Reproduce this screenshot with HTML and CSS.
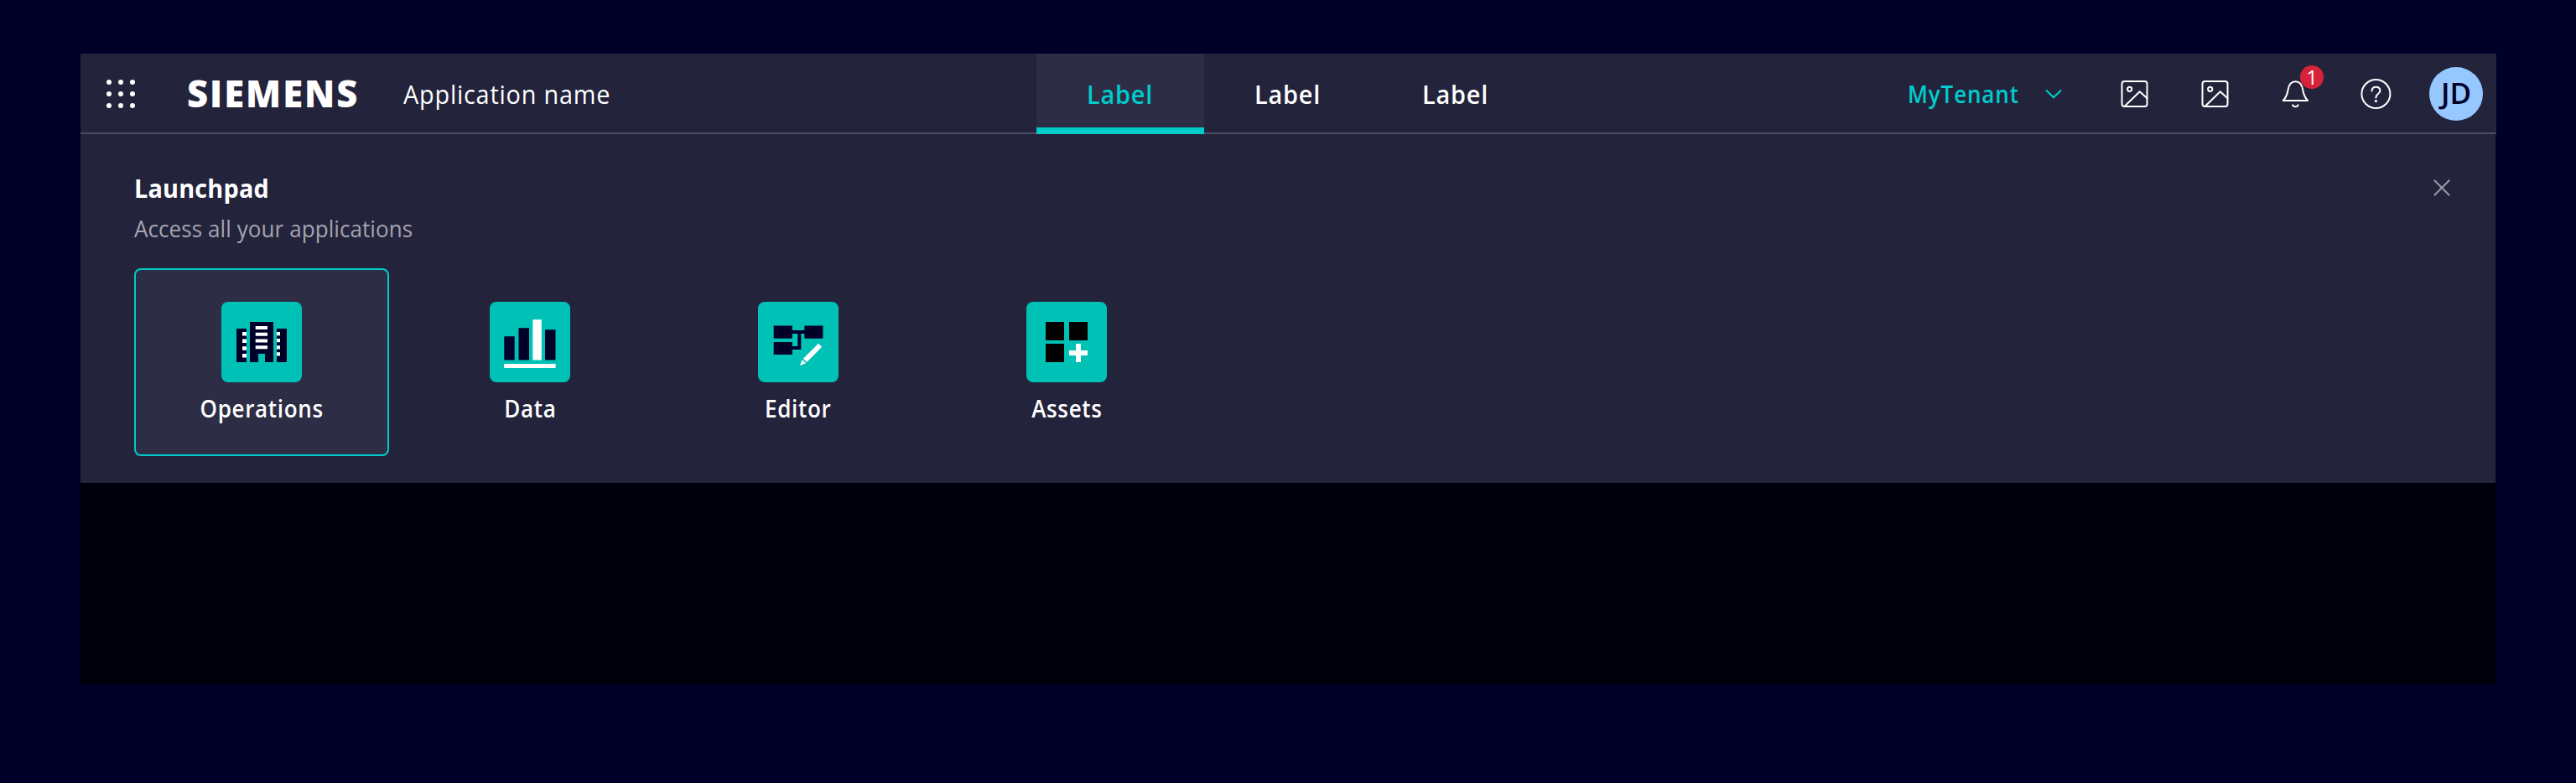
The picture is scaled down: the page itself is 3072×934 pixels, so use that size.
FILE: index.html
```html
<!DOCTYPE html>
<html lang="en">
<head>
<meta charset="utf-8">
<title>Launchpad</title>
<link rel="stylesheet" href="styles.css">
</head>
<body>
<div class="app">
  <header class="header">
    <div class="header-start">
      <svg class="cell" viewBox="0 0 96 96" fill="#fff">
        <circle cx="34" cy="34" r="3"/><circle cx="48" cy="34" r="3"/><circle cx="62" cy="34" r="3"/>
        <circle cx="34" cy="48" r="3"/><circle cx="48" cy="48" r="3"/><circle cx="62" cy="48" r="3"/>
        <circle cx="34" cy="62" r="3"/><circle cx="48" cy="62" r="3"/><circle cx="62" cy="62" r="3"/>
      </svg>
      <span class="logo">SIEMENS</span>
      <span class="app-name narrow">Application name</span>
    </div>
    <nav class="tabs">
      <a class="tab tab-active"><span class="tab-label">Label</span></a>
      <a class="tab"><span class="tab-label">Label</span></a>
      <a class="tab"><span class="tab-label">Label</span></a>
    </nav>
    <div class="header-end">
      <div class="tenant">
        <span class="tenant-name narrow">MyTenant</span>
        <svg class="chevron" viewBox="0 0 20 12"><path d="M1 1.5 10 10.3 19 1.5"/></svg>
      </div>
      <svg class="cell line" viewBox="0 0 96 96">
        <rect x="33.5" y="33" width="30" height="30" rx="3"/>
        <circle cx="42.7" cy="42.3" r="2.6"/>
        <path d="M37 62.5 54.7 45.2l8.8 8"/>
      </svg>
      <svg class="cell line" viewBox="0 0 96 96">
        <rect x="33.5" y="33" width="30" height="30" rx="3"/>
        <circle cx="42.7" cy="42.3" r="2.6"/>
        <path d="M37 62.5 54.7 45.2l8.8 8"/>
      </svg>
      <div class="bell">
        <svg class="cell line" viewBox="0 0 96 96">
          <path d="M33.8 56C37.6 52 38.6 48.500 39.500 43.500C40.500 37 43.500 33.300 48.400 33.300C53.300 33.300 56.300 37 57.300 43.500C58.200 48.500 59.200 52 63 56Z"/>
          <path d="M45.200 61.300C45.900 64 50.900 64 51.600 61.300"/>
        </svg>
        <span class="badge">1</span>
      </div>
      <svg class="cell line" viewBox="0 0 96 96">
        <circle cx="48.400" cy="48" r="17"/>
        <path d="M43.600 44.600C43.600 41.400 45.600 39.700 48.400 39.700C51.300 39.700 53.400 41.400 53.400 44.200C53.400 48 48.400 47.600 48.400 52.600"/>
        <circle class="dot" cx="48.400" cy="56.600" r="1.600"/>
      </svg>
      <div class="avatar-cell"><span class="avatar">JD</span></div>
    </div>
  </header>
  <main class="content">
    <section class="launchpad">
      <div class="launchpad-head">
        <div>
          <h2 class="title narrow">Launchpad</h2>
          <p class="subtitle narrow">Access all your applications</p>
        </div>
        <svg class="close" viewBox="0 0 20 20"><path d="M.8.8 19.200 19.200M19.200.8.8 19.200"/></svg>
      </div>
      <div class="apps">
        <a class="card card-active">
          <svg class="tile" viewBox="0 0 96 96">
            <path class="ink" d="M18 32h12v40H18zM34 24h28v48H52V62h-8v10H34zM66 32h12v40H66z"/>
            <path class="paper" d="M25 36h5v4.500h-5zM25 44.600h5v4.500h-5zM25 53.300h5v4.500h-5zM25 62h5v4.600h-5zM40.700 29H55v4H40.700zM40.700 36.800H55v4H40.700zM40.700 44.500H55v4H40.700zM40.700 52.300H55v4H40.700zM66 36h4v4.200h-4zM66 44h4v4.200h-4zM66 52.200h4v4.200h-4zM66 60.300h4v4.200h-4z"/>
          </svg>
          <span class="card-label">Operations</span>
        </a>
        <a class="card">
          <svg class="tile" viewBox="0 0 96 96">
            <path class="ink" d="M17.300 41.300h12.400v28.200H17.300zM34.500 31.200H47v38.300H34.500zM66 33.200h12.500v36.300H66z"/>
            <path class="paper" d="M51.300 21.200h10.500v48.300H51.300zM17.100 74h61.500v5H17.100z"/>
          </svg>
          <span class="card-label">Data</span>
        </a>
        <a class="card">
          <svg class="tile" viewBox="0 0 96 96">
            <path class="ink" d="M18.700 28.500h22.100V34h14.500v-5.500h22.100v15.200H55.300V38h-4v19H40.800v6H18.700V48h22.100v5h6.500V38h-6.500v5.700H18.700z"/>
            <path class="paper" d="M72 49.700l4.200 4.100L58.200 72l-4.300-4.200zM52.800 69l4.300 4.200L49.900 75.900z"/>
          </svg>
          <span class="card-label">Editor</span>
        </a>
        <a class="card">
          <svg class="tile" viewBox="0 0 96 96">
            <path fill="#000" d="M23 24h22v22H23zM51 24h22v22H51zM23 50h22v22H23z"/>
            <path class="paper" d="M59 50h6v8h8v6h-8v8h-6v-8h-8v-6h8z"/>
          </svg>
          <span class="card-label">Assets</span>
        </a>
      </div>
    </section>
  </main>
</div>
</body>
</html>
```
FILE: styles.css
```css
* { box-sizing: border-box; }
body {
  margin: 0;
  height: 934px;
  padding: 64px 96px;
  overflow: hidden;
  background: #000028;
  color: #fff;
  font-family: "Open Sans", "Noto Sans", sans-serif;
  font-size: 28px;
}
.narrow { transform: scaleX(.93); transform-origin: left center; }
.header {
  display: grid;
  grid-template-columns: 1140px 600px 1fr;
  height: 96px;
  margin-right: -1px;
  background: #23233c;
  box-shadow: inset 0 -2px #4c4c68;
}
.header-start, .header-end { display: flex; align-items: center; }
.header-end { justify-content: flex-end; }
.cell { display: block; flex: none; width: 96px; height: 96px; }
.line {
  fill: none;
  stroke: #fff;
  stroke-width: 2;
  stroke-linejoin: round;
  stroke-linecap: round;
}
.dot { fill: #fff; stroke: none; }
.logo {
  width: 258px;
  margin-left: 31px;
  padding-bottom: 1px;
  font-size: 43.5px;
  font-weight: 800;
  letter-spacing: 2px;
}
.app-name { font-size: 31px; letter-spacing: .85px; }
.tabs { display: grid; grid-template-columns: repeat(3, 200px); }
.tab {
  display: flex;
  align-items: center;
  justify-content: center;
  font-size: 31px;
  font-weight: 600;
}
.tab-label { transform: scaleX(.93); letter-spacing: .9px; }
.tab-active {
  background: #2d2d45;
  color: #00cccc;
  box-shadow: inset 0 -8px #00cccc;
}
.tenant {
  display: flex;
  align-items: center;
  width: 222px;
  color: #00cccc;
}
.tenant-name {
  width: 165px;
  padding-bottom: 1px;
  font-weight: 600;
  letter-spacing: .9px;
}
.chevron {
  width: 20px;
  height: 12px;
  margin-left: -1px;
  fill: none;
  stroke: #00cccc;
  stroke-width: 2;
}
.bell { position: relative; }
.badge {
  position: absolute;
  left: 54px;
  top: 14px;
  width: 28px;
  height: 28px;
  border-radius: 50%;
  background: #d72339;
  font-size: 24px;
  line-height: 27px;
  text-align: center;
}
.avatar-cell { display: flex; justify-content: center; width: 96px; }
.avatar {
  width: 64px;
  height: 64px;
  border-radius: 50%;
  background: #97c7ff;
  color: #000028;
  font-size: 35px;
  font-weight: 600;
  line-height: 62px;
  text-align: center;
}
.content { height: 656px; background: #00000a; }
.launchpad {
  height: 416px;
  padding: 40px 54px 32px 64px;
  background: #23233c;
}
.launchpad-head { display: flex; justify-content: space-between; }
.title {
  margin: 0;
  font-size: 31px;
  font-weight: 700;
  line-height: 48px;
  letter-spacing: .2px;
}
.subtitle {
  margin: 0 0 26px;
  color: #a4a4af;
  line-height: 48px;
  height: 46px;
  letter-spacing: .07px;
}
.close {
  width: 20px;
  height: 20px;
  margin-top: 14px;
  fill: none;
  stroke: #9999a9;
  stroke-width: 2;
}
.apps { display: grid; grid-template-columns: repeat(4, 304px); gap: 16px; }
.card {
  display: flex;
  flex-direction: column;
  align-items: center;
  height: 224px;
  padding-top: 38px;
  border: 2px solid transparent;
  border-radius: 8px;
}
.card-active { border-color: #00cccc; background: #2d2d45; }
.tile {
  display: block;
  width: 96px;
  height: 96px;
  border-radius: 8px;
  background: #00c1b6;
}
.ink { fill: #000028; }
.paper { fill: #fff; }
.card-label {
  font-weight: 600;
  line-height: 63px;
  letter-spacing: .7px;
  transform: scaleX(.93);
}
```
